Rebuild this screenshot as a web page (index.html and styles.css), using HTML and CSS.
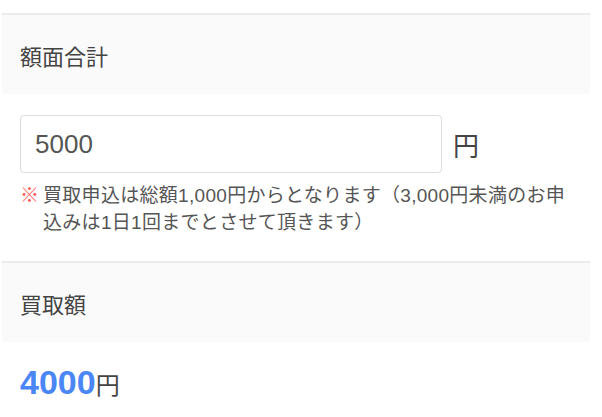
FILE: index.html
```html
<!DOCTYPE html>
<html lang="ja">
<head>
	<meta charset="utf-8">
	<title>買取申込</title>
	<link rel="stylesheet" href="styles.css">
</head>
<body>
	<div class="panel">
		<div class="panel-head">額面合計</div>
		<div class="panel-body">
			<div class="amount-row">
				<input class="amount-input" type="text" value="5000">
				<span class="yen">円</span>
			</div>
			<div class="note">
				<span class="note-mark">※</span>
				<span class="note-text">買取申込は総額1,000円からとなります（3,000円未満のお申込みは1日1回までとさせて頂きます）</span>
			</div>
		</div>

		<div class="panel-head">買取額</div>
		<div class="panel-body result">
			<span class="result-value">4000</span><span class="result-yen">円</span>
		</div>
	</div>
</body>
</html>
```

FILE: styles.css
```css
body {
	margin: 0;
	background: #fff;
	font-family: "Liberation Sans", "Noto Sans CJK JP", sans-serif;
	color: #444;
}

.panel {
	width: 588px;
	margin: 13px 0 0 2px;
}

.panel-head {
	display: flex;
	align-items: center;
	height: 79px;
	padding: 0 18px;
	border-top: 2px solid #ebebeb;
	background-color: #fafafa;
	font-size: 22px;
	color: #444;
}

.panel-body {
	padding: 21px 18px 25px;
}

.amount-row {
	display: flex;
	align-items: center;
	gap: 11px;
}

.amount-input {
	box-sizing: border-box;
	width: 422px;
	height: 58px;
	padding: 0 14px;
	border: 1px solid #ddd;
	border-radius: 4px;
	font-family: inherit;
	font-size: 26px;
	color: #555;
	outline: none;
}

.yen {
	font-size: 26px;
	color: #444;
}

.note {
	display: flex;
	margin-top: 9px;
	font-size: 19px;
	letter-spacing: 0.3px;
	line-height: 27px;
	color: #555;
}

.note-mark {
	flex: none;
	width: 23px;
	color: #f55;
}

.result {
	padding-top: 20px;
	line-height: 40px;
}

.result-value {
	font-size: 34px;
	font-weight: bold;
	color: #4a86f5;
}

.result-yen {
	font-size: 24px;
	color: #444;
}
```
